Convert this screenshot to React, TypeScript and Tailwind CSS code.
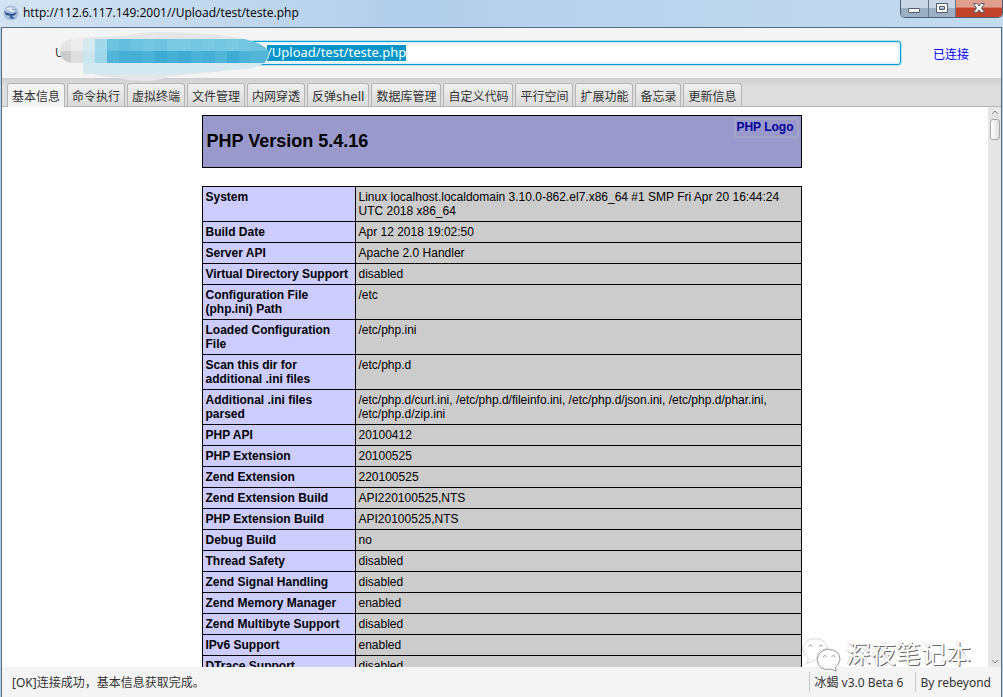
import React from "react";

const tabs = [
  "基本信息", "命令执行", "虚拟终端", "文件管理", "内网穿透", "反弹shell",
  "数据库管理", "自定义代码", "平行空间", "扩展功能", "备忘录", "更新信息",
];

const rows: [string, string][] = [
  ["System", "Linux localhost.localdomain 3.10.0-862.el7.x86_64 #1 SMP Fri Apr 20 16:44:24 UTC 2018 x86_64"],
  ["Build Date", "Apr 12 2018 19:02:50"],
  ["Server API", "Apache 2.0 Handler"],
  ["Virtual Directory Support", "disabled"],
  ["Configuration File (php.ini) Path", "/etc"],
  ["Loaded Configuration File", "/etc/php.ini"],
  ["Scan this dir for additional .ini files", "/etc/php.d"],
  ["Additional .ini files parsed", "/etc/php.d/curl.ini, /etc/php.d/fileinfo.ini, /etc/php.d/json.ini, /etc/php.d/phar.ini, /etc/php.d/zip.ini"],
  ["PHP API", "20100412"],
  ["PHP Extension", "20100525"],
  ["Zend Extension", "220100525"],
  ["Zend Extension Build", "API220100525,NTS"],
  ["PHP Extension Build", "API20100525,NTS"],
  ["Debug Build", "no"],
  ["Thread Safety", "disabled"],
  ["Zend Signal Handling", "disabled"],
  ["Zend Memory Manager", "enabled"],
  ["Zend Multibyte Support", "disabled"],
  ["IPv6 Support", "enabled"],
  ["DTrace Support", "disabled"],
];

const mosaicTop = ["#e4e4e4", "#ededed", "#d5e9f1", "#a3d8eb", "#6dc2e0", "#67bfdf", "#6dc2e0", "#74c6e1", "#70c3e0", "#7ac9e3", "#7ac9e3", "#74c6e1", "#7ac9e3", "#74c6e1", "#7ac9e3", "#74c6e1", "#6dc2e0", "#6dc2e0"];
const mosaicMid = ["#cbcbcb", "#dedede", "#cce6f0", "#a0d6ea", "#52b5d8", "#45afd6", "#45afd6", "#4bb2d8", "#3eabd4", "#45afd6", "#3eabd4", "#4bb2d8", "#45afd6", "#52b5d8", "#3eabd4", "#4bb2d8", "#52b5d8", "#52b5d8"];

function Mosaic() {
  return (
    <svg className="pointer-events-none absolute left-[54px] top-1 z-10" width="220" height="52" viewBox="56 32 220 52" aria-hidden="true">
      <path d="M66 42Q74 38 92 37L125 36Q140 32 160 32Q190 32 220 35L246 39Q262 44 268 50L269 58Q262 66 243 69L205 73L172 76Q160 80 150 81Q130 81 118 78L95 75V62H70Z" fill="#e4e6e7" />
      <path d="M83 62H266Q258 68 243 69L205 72L172 75H95V74H83Z" fill="#d5e9f1" />
      <clipPath id="pixels">
        <path d="M71 39H244Q262 43 268 50Q270 57 264 63H71Q60 61 60 51Q61 41 71 39Z" />
      </clipPath>
      <g clipPath="url(#pixels)" shapeRendering="crispEdges">
        {mosaicTop.map((c, i) => <rect key={i} x={59 + i * 12} y="39" width="12" height="12" fill={c} />)}
        {mosaicMid.map((c, i) => <rect key={i} x={59 + i * 12} y="51" width="12" height="12" fill={c} />)}
      </g>
    </svg>
  );
}

function AppIcon() {
  return (
    <svg width="16" height="16" viewBox="0 0 16 16" aria-hidden="true">
      <circle cx="8" cy="8" r="7.6" fill="#a9bfdb" />
      <path d="M2 5Q6 1 11 3L13 6L9 7L5 5Z" fill="#dde9f4" />
      <path d="M1 6L4 8L9 9L14 7L12 10L9 11L12 14L6 13L8 11L3 10Z" fill="#2c5594" />
      <path d="M9 4L13 5" stroke="#7892b3" />
    </svg>
  );
}

function WindowButtons() {
  return (
    <div className="flex h-[18px] overflow-hidden rounded-b-[5px] border border-t-0 border-[#4f5d70]">
      <button aria-label="Minimize" className="flex w-7 items-center justify-center border-r border-[#66758a] bg-linear-to-b from-[#c9d6e5] from-45% to-[#9dafc5] to-50%">
        <svg width="13" height="14" viewBox="0 0 13 14"><rect x="0.500" y="6.500" width="11" height="4" rx="0.500" fill="#fff" stroke="#535b6b" /></svg>
      </button>
      <button aria-label="Maximize" className="flex w-[27px] items-center justify-center border-r border-[#66758a] bg-linear-to-b from-[#c9d6e5] from-45% to-[#9dafc5] to-50%">
        <svg width="13" height="14" viewBox="0 0 13 14"><path fillRule="evenodd" d="M0.500 1.500H11.500V10.500H0.500ZM3.500 4.500V7.500H8.500V4.500Z" fill="#fff" stroke="#535b6b" /></svg>
      </button>
      <button aria-label="Close" className="flex w-[46px] items-center justify-center bg-linear-to-b from-[#e0a090] from-40% to-[#c2432b] to-50%">
        <svg width="14" height="14" viewBox="0 0 14 14"><path d="M1.500 1.500H5L7 4L9 1.500H12.500L9.500 6L12.500 10.500H9L7 8L5 10.500H1.500L4.500 6Z" fill="#fff" stroke="#535b6b" /></svg>
      </button>
    </div>
  );
}

function Watermark() {
  return (
    <div className="pointer-events-none absolute bottom-6 right-[30px] flex items-center gap-1 font-['Liberation_Sans','Noto_Sans_CJK_SC',sans-serif]">
      <svg width="42" height="38" viewBox="0 0 44 40" fill="#fff" stroke="#777" strokeWidth="0.8" aria-hidden="true">
        <path d="M7 30L9 25Q2 20 3 13Q5 4 16 4Q27 4 29 14Q18 15 18 24L14 27Z" stroke="#ccc" />
        <path d="M30 15Q42 16 42 26Q41 31 37 34L38 38L33 36Q19 38 18 26Q19 16 30 15Z" />
        <path d="M9 12Q11 9 13 12M20 12Q22 9 24 12M24 23Q26 20 28 23M33 23Q35 20 37 23" fill="none" />
      </svg>
      <span className="text-[25px] leading-8 text-white [text-shadow:1px_1px_0_#666,-1px_0_0_#ddd]">深夜笔记本</span>
    </div>
  );
}

export default function App() {
  return (
    <div className="flex h-screen flex-col overflow-hidden bg-[#b3d0eb] font-['Noto_Sans','Noto_Sans_CJK_SC',sans-serif] text-[12px] text-[#333]">
      <header className="flex h-[27px] shrink-0 items-start justify-between bg-linear-to-r from-[#d3e3f3] via-[#b2cfeb] via-40% to-[#c4dbf0]">
        <div className="flex h-[26px] items-center gap-1 pl-[3px] text-black">
          <AppIcon />
          <h1 className="font-['Open_Sans',sans-serif] text-[12px]">http://112.6.117.149:2001//Upload/test/teste.php</h1>
        </div>
        <WindowButtons />
      </header>

      <main className="relative mx-px flex min-h-0 flex-1 flex-col border-x border-t border-[#586b80] bg-[#f4f4f4]">
        <section className="relative flex h-[50px] shrink-0 items-center pl-[53px] pr-8">
          <label htmlFor="url" className="w-9">URL</label>
          <div className="flex h-6 flex-1 items-center rounded-[3px] border border-[#039ed3] bg-white pl-[175px] shadow-[0_0_0_1px_#b9e1ef,inset_0_0_0_2px_#e0f2f8]">
            <input
              id="url"
              defaultValue="/Upload/test/teste.php"
              className="field-sizing-content h-4 bg-[#0096c9] text-[13px] text-white outline-none"
            />
          </div>
          <span className="ml-8 pt-1 text-[#0000ff]">已连接</span>
          <Mosaic />
        </section>

        <nav role="tablist" className="flex h-[29px] shrink-0 items-end gap-0.5 border-b border-[#b5b5b5] bg-linear-to-b from-[#cfcfcf] to-[#dddddd] to-30% pl-[5px]">
          {tabs.map((t, i) => (
            <button
              key={t}
              role="tab"
              aria-selected={i === 0}
              className={
                i === 0
                  ? "-mb-px h-6 rounded-t-[3px] border border-b-0 border-[#b5b5b5] bg-[#f4f4f4] px-1 pt-0.5"
                  : "h-[23px] rounded-t-[3px] border border-b-0 border-[#b5b5b5] bg-linear-to-b from-[#f0f0f0] to-[#dadada] px-1 pt-[3px] leading-4"
              }
            >
              {t.replace("shell", "")}
              {t.endsWith("shell") && <span className="text-[13px]">shell</span>}
            </button>
          ))}
        </nav>

        <section className="relative min-h-0 flex-1 overflow-hidden bg-white pt-2 font-['Liberation_Sans',sans-serif] text-black">
          <div className="mx-auto flex h-[53px] w-[600px] items-start justify-between border border-black bg-[#9999cc] pl-1 pr-0.5">
            <h2 className="self-center text-[18px] font-bold">PHP Version 5.4.16</h2>
            <a href="#logo" className="mt-0.5 h-5 rounded-[2px] border-2 border-[#a5a5c5] pr-[3px] text-[12px] font-bold leading-[14px] text-[#000099]">PHP Logo</a>
          </div>
          <table className="mx-auto mt-[18px] w-[600px] table-fixed border-collapse text-[12px] leading-[14px]">
            <colgroup><col className="w-[153px]" /><col /></colgroup>
            <tbody>
              {rows.map(([k, v]) => (
                <tr key={k}>
                  <th className="border border-black bg-[#ccccff] p-[3px] text-left align-top font-bold">{k}</th>
                  <td className="border border-black bg-[#cccccc] p-[3px] align-top">{v}</td>
                </tr>
              ))}
            </tbody>
          </table>
          <div className="absolute inset-y-0 right-0 flex w-[13px] flex-col items-center justify-between bg-[#e6e6e6] py-[3px]">
            <div className="flex flex-col items-center gap-1">
              <svg width="8" height="5" viewBox="0 0 8 5" fill="none" stroke="#888"><path d="M1 4L4 1L7 4" /></svg>
              <div className="h-[21px] w-2.5 rounded-[3px] border border-[#a8a8a8] bg-linear-to-r from-white to-[#dedede]" />
            </div>
            <svg width="8" height="5" viewBox="0 0 8 5" fill="none" stroke="#888"><path d="M1 1L4 4L7 1" /></svg>
          </div>
        </section>

        <footer className="flex h-[30px] shrink-0 items-center pl-2.5 pr-2">
          <span className="flex-1 pt-0.5">[OK]连接成功，基本信息获取完成。</span>
          <span className="border-l border-[#c8c8c8] pl-1 pr-3 pt-0.5">冰蝎 v3.0 Beta 6</span>
          <span className="border-l border-[#c8c8c8] pl-1 pr-0.5 pt-0.5">By rebeyond</span>
        </footer>
        <Watermark />
      </main>
    </div>
  );
}
